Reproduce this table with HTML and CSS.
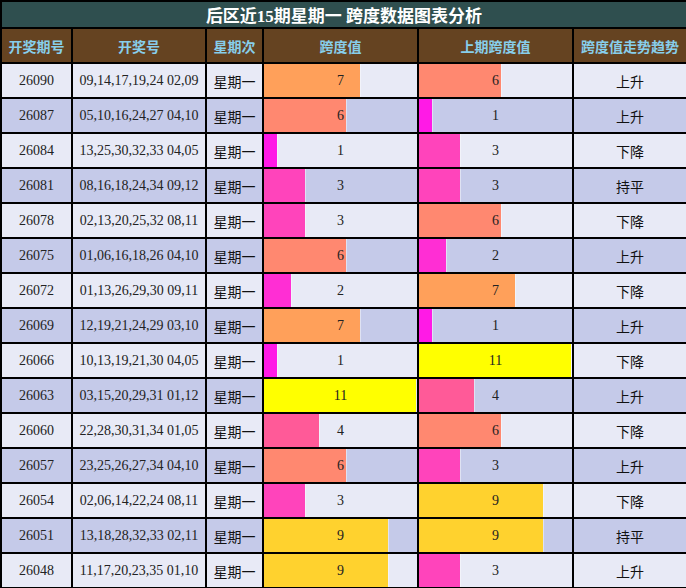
FILE: index.html
```html
<!DOCTYPE html>
<html lang="zh">
<head>
<meta charset="utf-8">
<title>后区近15期星期一 跨度数据图表分析</title>
<link rel="stylesheet" href="styles.css">
</head>
<body>
<table class="chart">
  <colgroup>
    <col class="c-issue"><col class="c-nums"><col class="c-week"><col class="c-span"><col class="c-prev"><col class="c-trend">
  </colgroup>
  <thead>
    <tr class="title-row"><th colspan="6">后区近15期星期一 跨度数据图表分析</th></tr>
    <tr class="head-row"><th>开奖期号</th><th>开奖号</th><th>星期次</th><th>跨度值</th><th>上期跨度值</th><th>跨度值走势趋势</th></tr>
  </thead>
  <tbody>
    <tr><td>26090</td><td>09,14,17,19,24 02,09</td><td class="cjk">星期一</td><td class="bar" style="--w:63.64%;--c:#ffa05a">7</td><td class="bar" style="--w:54.55%;--c:#ff8870">6</td><td class="cjk">上升</td></tr>
    <tr><td>26087</td><td>05,10,16,24,27 04,10</td><td class="cjk">星期一</td><td class="bar" style="--w:54.55%;--c:#ff8870">6</td><td class="bar" style="--w:9.09%;--c:#ff1ae6">1</td><td class="cjk">上升</td></tr>
    <tr><td>26084</td><td>13,25,30,32,33 04,05</td><td class="cjk">星期一</td><td class="bar" style="--w:9.09%;--c:#ff1ae6">1</td><td class="bar" style="--w:27.27%;--c:#ff44bb">3</td><td class="cjk">下降</td></tr>
    <tr><td>26081</td><td>08,16,18,24,34 09,12</td><td class="cjk">星期一</td><td class="bar" style="--w:27.27%;--c:#ff44bb">3</td><td class="bar" style="--w:27.27%;--c:#ff44bb">3</td><td class="cjk">持平</td></tr>
    <tr><td>26078</td><td>02,13,20,25,32 08,11</td><td class="cjk">星期一</td><td class="bar" style="--w:27.27%;--c:#ff44bb">3</td><td class="bar" style="--w:54.55%;--c:#ff8870">6</td><td class="cjk">下降</td></tr>
    <tr><td>26075</td><td>01,06,16,18,26 04,10</td><td class="cjk">星期一</td><td class="bar" style="--w:54.55%;--c:#ff8870">6</td><td class="bar" style="--w:18.18%;--c:#ff2ed4">2</td><td class="cjk">上升</td></tr>
    <tr><td>26072</td><td>01,13,26,29,30 09,11</td><td class="cjk">星期一</td><td class="bar" style="--w:18.18%;--c:#ff2ed4">2</td><td class="bar" style="--w:63.64%;--c:#ffa05a">7</td><td class="cjk">下降</td></tr>
    <tr><td>26069</td><td>12,19,21,24,29 03,10</td><td class="cjk">星期一</td><td class="bar" style="--w:63.64%;--c:#ffa05a">7</td><td class="bar" style="--w:9.09%;--c:#ff1ae6">1</td><td class="cjk">上升</td></tr>
    <tr><td>26066</td><td>10,13,19,21,30 04,05</td><td class="cjk">星期一</td><td class="bar" style="--w:9.09%;--c:#ff1ae6">1</td><td class="bar" style="--w:100%;--c:#ffff00">11</td><td class="cjk">下降</td></tr>
    <tr><td>26063</td><td>03,15,20,29,31 01,12</td><td class="cjk">星期一</td><td class="bar" style="--w:100%;--c:#ffff00">11</td><td class="bar" style="--w:36.36%;--c:#ff5a98">4</td><td class="cjk">上升</td></tr>
    <tr><td>26060</td><td>22,28,30,31,34 01,05</td><td class="cjk">星期一</td><td class="bar" style="--w:36.36%;--c:#ff5a98">4</td><td class="bar" style="--w:54.55%;--c:#ff8870">6</td><td class="cjk">下降</td></tr>
    <tr><td>26057</td><td>23,25,26,27,34 04,10</td><td class="cjk">星期一</td><td class="bar" style="--w:54.55%;--c:#ff8870">6</td><td class="bar" style="--w:27.27%;--c:#ff44bb">3</td><td class="cjk">上升</td></tr>
    <tr><td>26054</td><td>02,06,14,22,24 08,11</td><td class="cjk">星期一</td><td class="bar" style="--w:27.27%;--c:#ff44bb">3</td><td class="bar" style="--w:81.82%;--c:#ffd22e">9</td><td class="cjk">下降</td></tr>
    <tr><td>26051</td><td>13,18,28,32,33 02,11</td><td class="cjk">星期一</td><td class="bar" style="--w:81.82%;--c:#ffd22e">9</td><td class="bar" style="--w:81.82%;--c:#ffd22e">9</td><td class="cjk">持平</td></tr>
    <tr><td>26048</td><td>11,17,20,23,35 01,10</td><td class="cjk">星期一</td><td class="bar" style="--w:81.82%;--c:#ffd22e">9</td><td class="bar" style="--w:27.27%;--c:#ff44bb">3</td><td class="cjk">上升</td></tr>
  </tbody>
</table>
</body>
</html>
```

FILE: styles.css
```css
html, body {
  margin: 0;
  padding: 0;
  background: #ffffff;
}

.chart {
  width: 686px;
  border-collapse: collapse;
  table-layout: fixed;
  font-family: "Liberation Serif", "Noto Sans CJK SC", serif;
  font-size: 14px;
  color: #222;
}

.c-issue { width: 71px; }
.c-nums { width: 134px; }
.c-week { width: 57px; }
.c-span { width: 155px; }
.c-prev { width: 155px; }
.c-trend { width: 114px; }

.chart th,
.chart td {
  border: 2px solid #000;
  padding: 0;
  text-align: center;
  vertical-align: middle;
  white-space: nowrap;
  overflow: hidden;
}

.title-row th {
  height: 25px;
  background: #2f4f4f;
  color: #ffffff;
  font-size: 17px;
  font-weight: bold;
}

.head-row th {
  height: 33px;
  background: #654321;
  color: #87ceeb;
  font-family: "Noto Sans CJK SC", sans-serif;
  font-size: 14px;
  font-weight: bold;
}

.chart tbody td {
  height: 33px;
}

.chart tbody tr:nth-child(odd) td {
  background-color: #e8eaf6;
}

.chart tbody tr:nth-child(even) td {
  background-color: #c5cae9;
}

.chart td.cjk {
  font-family: "Noto Sans CJK SC", sans-serif;
  font-size: 14px;
  color: #111;
}

.chart tbody td.bar {
  background-image: linear-gradient(to right,
    var(--c) calc(var(--w) - 1px),
    rgba(255, 255, 255, 0.45) calc(var(--w) - 1px),
    rgba(255, 255, 255, 0.45) var(--w),
    transparent var(--w));
  background-repeat: no-repeat;
}
```
